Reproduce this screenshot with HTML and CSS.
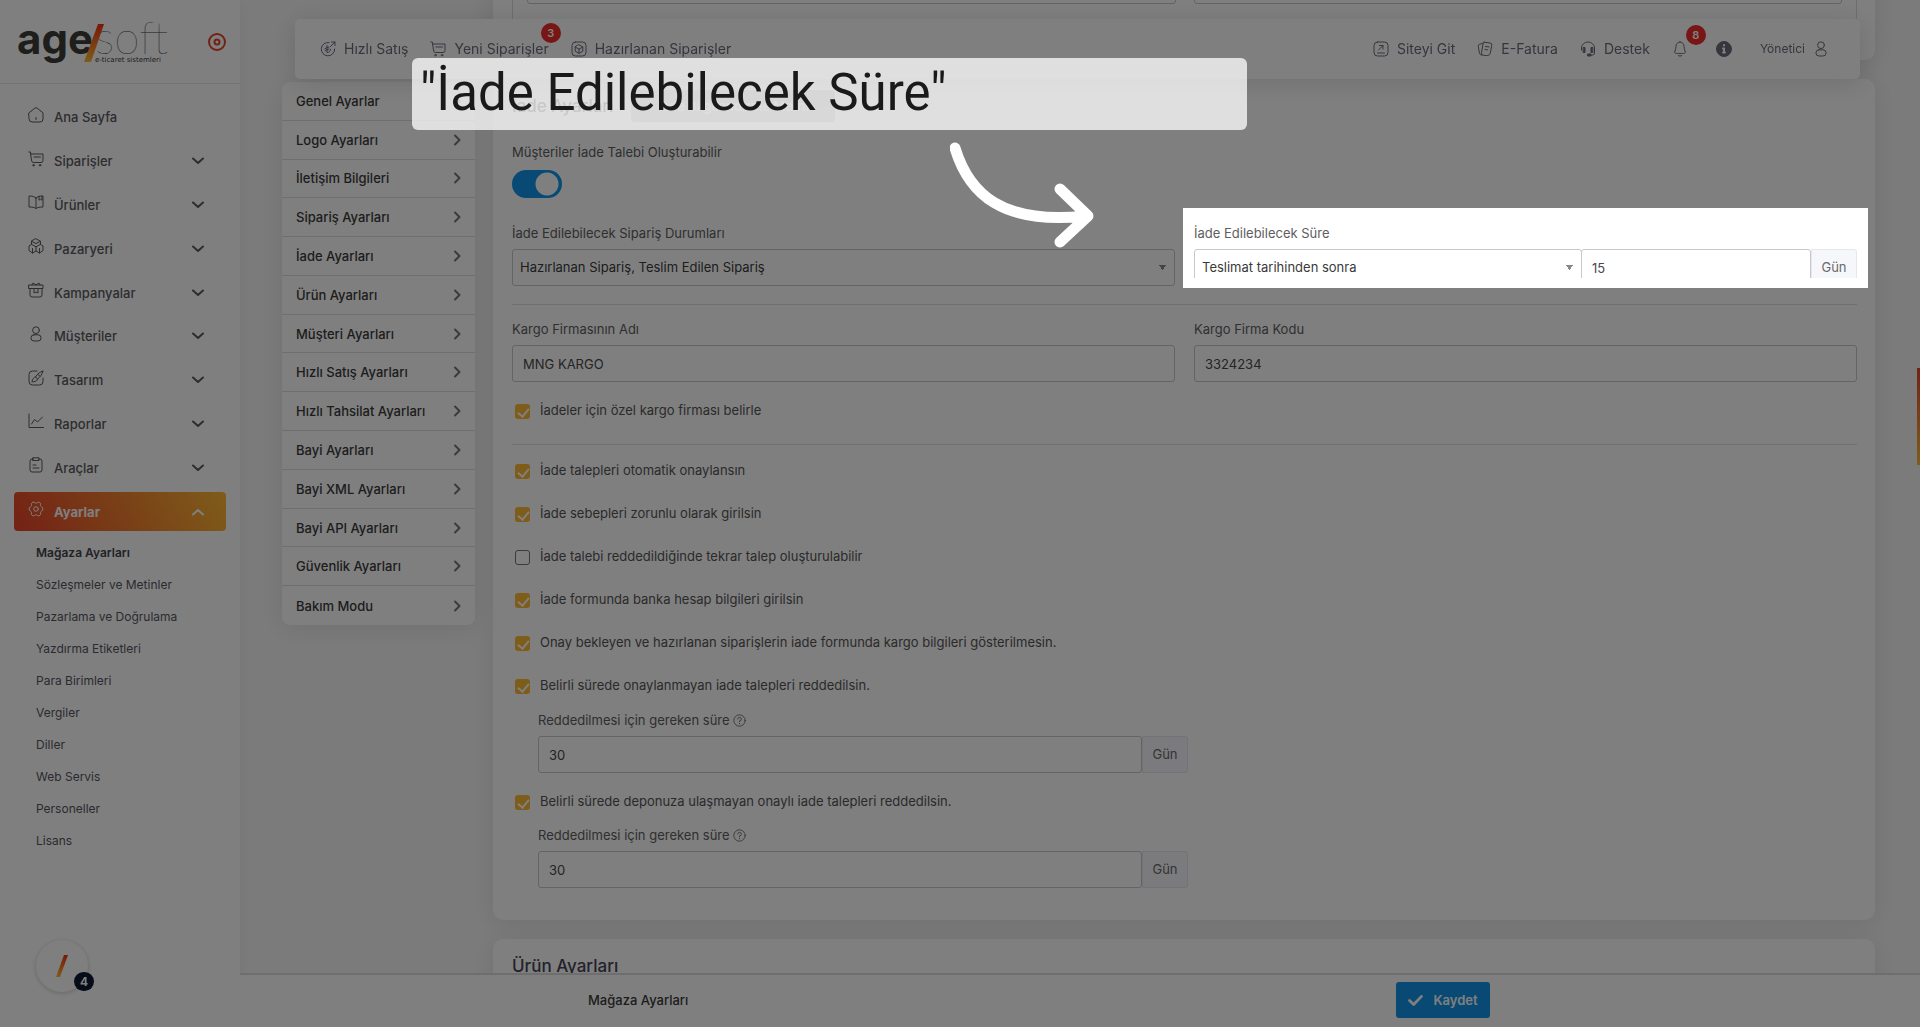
FILE: index.html
```html
<!DOCTYPE html>
<html lang="tr">
<head>
    <meta charset="UTF-8">
    <meta name="viewport" content="width=device-width, initial-scale=1.0">
    <title>Mağaza Ayarları</title>
    <link rel="stylesheet" href="styles.css">
</head>
<body>
    <!-- Icon set -->
    <svg class="sprite" aria-hidden="true">
        <symbol id="i-home" viewBox="0 0 16 16"><path d="M1 5.8 6.8 1.2a2 2 0 0 1 2.4 0L15 5.8V12a3 3 0 0 1-3 3H4a3 3 0 0 1-3-3zM8 10.5v2"/></symbol>
        <symbol id="i-cart" viewBox="0 0 16 16"><path d="M.8 1h1.6l.4 2M3 3h12v6.500a2 2 0 0 1-2 2H5.500a2 2 0 0 1-2-2zM6 6h6.500"/><circle cx="5.500" cy="14.200" r=".8"/><circle cx="12" cy="14.200" r=".8"/></symbol>
        <symbol id="i-book" viewBox="0 0 16 16"><path d="M8 4v10.500M8 4C6.500 2.500 4 2 1 2v11c3 0 5.500.3 7 1.500 1.500-1.200 4-1.500 7-1.500V2c-3 0-5.500.5-7 2zM11 2.200v4l1.500-1 1.500 1V2"/></symbol>
        <symbol id="i-box" viewBox="0 0 16 16"><path d="M8 .8 12.500 3.300v3L8 8.800 3.500 6.300v-3zM3.500 3.300 8 5.500l4.500-2.200M3.500 6.300 1 8v4.500L4.500 15 8 13V8.800M12.500 6.300 15 8v4.500L11.500 15 8 13M4.500 10.500V15M11.500 10.500V15"/></symbol>
        <symbol id="i-gift" viewBox="0 0 16 16"><path d="M1 3h14v3.500H1zM2 6.500V13a2 2 0 0 0 2 2h8a2 2 0 0 0 2-2V6.500M6 6.500v4.500l2-1 2 1V6.500M4 3l1-2 3 2 3-2 1 2"/></symbol>
        <symbol id="i-user" viewBox="0 0 16 16"><circle cx="8" cy="4.200" r="3.400"/><path d="M6 8.800h4a3.100 3.100 0 0 1 0 6.200H6a3.100 3.100 0 0 1 0-6.200z"/></symbol>
        <symbol id="i-brush" viewBox="0 0 16 16"><path d="M9 1H4.500A3.500 3.500 0 0 0 1 4.500v7A3.500 3.500 0 0 0 4.500 15h7a3.500 3.500 0 0 0 3.500-3.500V8M14.800 1.200C12 1.500 9.500 4 7.500 7l2.200 2c2.600-2.300 4.800-5 5.100-7.800zM7.500 7c-2.200.2-2.500 2-3.700 4.800 2.500.2 5-.3 5.900-2.800M10 4.500 12 6.200"/></symbol>
        <symbol id="i-chart" viewBox="0 0 16 16"><path d="M1 1v13.500h14.500M3.500 11 6.500 6.500 9.500 9 14.500 4"/></symbol>
        <symbol id="i-clip" viewBox="0 0 16 16"><path d="M5.500 2H4a2 2 0 0 0-2 2v9a2 2 0 0 0 2 2h8a2 2 0 0 0 2-2V4a2 2 0 0 0-2-2h-1.500M5 .8h6v2.700H5zM5 8h3M5 11h6"/></symbol>
        <symbol id="i-gear" viewBox="0 0 16 16"><path d="M5 1.200c1.200-.4 1.800 1 3 1s1.800-1.400 3-1 2 1.400 1.600 2.600c-.4 1.300.2 1.700 1.200 2.200 1.500.8 1.500 3.200 0 4-1 .5-1.600.9-1.200 2.200.4 1.200-.4 2.200-1.600 2.600s-1.800-1-3-1-1.800 1.400-3 1-2-1.400-1.600-2.600c.4-1.300-.2-1.700-1.200-2.200-1.500-.8-1.500-3.200 0-4 1-.5 1.600-.9 1.200-2.200C3 2.600 3.800 1.600 5 1.200z"/><circle cx="8" cy="8" r="2.300"/></symbol>
        <symbol id="i-down" viewBox="0 0 12 8"><path d="m1 1.500 5 4.500 5-4.500"/></symbol>
        <symbol id="i-up" viewBox="0 0 12 8"><path d="m1 6.500 5-4.500 5 4.500"/></symbol>
        <symbol id="i-right" viewBox="0 0 8 12"><path d="m2 1.500 4.500 4.500L2 10.500"/></symbol>
        <symbol id="i-sale" viewBox="0 0 16 16"><path d="M9 1.500A6.700 6.700 0 1 0 14.700 8M10.500 5.500 15 1M11.500 1H15v3.500M7 4.500v7c2 0 3.500-1 3.500-3M5 7.500l4-1.500M5 9.500 9 8"/></symbol>
        <symbol id="i-pack" viewBox="0 0 16 16"><rect x="1" y="1" width="14" height="14" rx="3.500"/><path d="M8 3.800 11.800 6v4.200L8 12.300l-3.800-2.100V6zM4.200 6 8 8.200 11.800 6M8 8.200v4"/></symbol>
        <symbol id="i-goto" viewBox="0 0 16 16"><rect x="1" y="1" width="14" height="14" rx="3.500"/><path d="M5.500 9 10 4.500M6.500 4.500H10V8M4.500 12h7"/></symbol>
        <symbol id="i-bill" viewBox="0 0 16 16"><path d="M7 1.200l6 .8a2 2 0 0 1 1.800 2.400L13.500 11a4 4 0 0 1-4.300 3.600l-3-.4a2 2 0 0 1-1.700-2.400L6 3A2 2 0 0 1 7 1.200zM5.300 2.500 2.800 3.200A2 2 0 0 0 1.300 5.500L2.400 12a3 3 0 0 0 2.500 2.300M8.500 5.500l3.500.4M8 8.500l2.500.3"/></symbol>
        <symbol id="i-head" viewBox="0 0 16 16"><path d="M1.500 9V7a6.500 6 0 0 1 13 0v5a2 2 0 0 1-2 2H9"/><path class="solid" d="M3.500 6.500h1.500v5H3.500zM12.500 6.500H11v5h1.500zM8 13h3v2H8z"/></symbol>
        <symbol id="i-bell" viewBox="0 0 16 16"><path d="M8 1a4 4 0 0 0-4 4.200C4 8.800 2.700 9.500 2.700 11S4 12.500 8 12.500s5.300 0 5.300-1.500S12 8.800 12 5.200A4 4 0 0 0 8 1zM6.300 14.600c1 .7 2.400.7 3.400 0"/></symbol>
        <symbol id="i-info" viewBox="0 0 16 16"><circle class="solid" cx="8" cy="8" r="7.500"/><path class="cut" d="M8 4v.5M7 7.500h1v4M7 11.500h2"/></symbol>
        <symbol id="i-help" viewBox="0 0 16 16"><circle cx="8" cy="8" r="7"/><path d="M5.800 6.300A2.200 2.200 0 1 1 8 8.500v1M8 11.500v.5"/></symbol>
        <symbol id="i-check" viewBox="0 0 16 12"><path d="m1.500 6 4.500 4.300L14.500 1.500"/></symbol>
    </svg>

    <div class="layout">
        <aside class="sidebar">
            <div class="brand">
                <svg class="logo" viewBox="0 0 150 46" role="img" aria-label="agesoft e-ticaret sistemleri">
                    <defs>
                        <linearGradient id="slash" x1="0" y1="0" x2="0" y2="1">
                            <stop offset="0" stop-color="#f0300f"/>
                            <stop offset="1" stop-color="#fdb933"/>
                        </linearGradient>
                    </defs>
                    <text class="logo-bold" x="-1" y="35">age</text>
                    <text class="logo-thin" x="77" y="35">soft</text>
                    <path d="M80 5h6L73 43h-7z" fill="url(#slash)"/>
                    <text class="logo-tag" x="77" y="43">e-ticaret sistemleri</text>
                </svg>
                <svg class="pin" viewBox="0 0 18 18"><circle cx="9" cy="9" r="8"/><circle cx="9" cy="9" r="2.500"/></svg>
            </div>
            <nav class="menu">
                <a href="#"><svg class="icon"><use href="#i-home"/></svg><span>Ana Sayfa</span></a>
                <a href="#"><svg class="icon"><use href="#i-cart"/></svg><span>Siparişler</span><svg class="arrow"><use href="#i-down"/></svg></a>
                <a href="#"><svg class="icon"><use href="#i-book"/></svg><span>Ürünler</span><svg class="arrow"><use href="#i-down"/></svg></a>
                <a href="#"><svg class="icon"><use href="#i-box"/></svg><span>Pazaryeri</span><svg class="arrow"><use href="#i-down"/></svg></a>
                <a href="#"><svg class="icon"><use href="#i-gift"/></svg><span>Kampanyalar</span><svg class="arrow"><use href="#i-down"/></svg></a>
                <a href="#"><svg class="icon"><use href="#i-user"/></svg><span>Müşteriler</span><svg class="arrow"><use href="#i-down"/></svg></a>
                <a href="#"><svg class="icon"><use href="#i-brush"/></svg><span>Tasarım</span><svg class="arrow"><use href="#i-down"/></svg></a>
                <a href="#"><svg class="icon"><use href="#i-chart"/></svg><span>Raporlar</span><svg class="arrow"><use href="#i-down"/></svg></a>
                <a href="#"><svg class="icon"><use href="#i-clip"/></svg><span>Araçlar</span><svg class="arrow"><use href="#i-down"/></svg></a>
                <a href="#" class="active"><svg class="icon"><use href="#i-gear"/></svg><span>Ayarlar</span><svg class="arrow"><use href="#i-up"/></svg></a>
            </nav>
            <nav class="submenu">
                <a href="#" class="current">Mağaza Ayarları</a>
                <a href="#">Sözleşmeler ve Metinler</a>
                <a href="#">Pazarlama ve Doğrulama</a>
                <a href="#">Yazdırma Etiketleri</a>
                <a href="#">Para Birimleri</a>
                <a href="#">Vergiler</a>
                <a href="#">Diller</a>
                <a href="#">Web Servis</a>
                <a href="#">Personeller</a>
                <a href="#">Lisans</a>
            </nav>
            <button class="chat" type="button" aria-label="Canlı destek">
                <svg viewBox="0 0 14 24"><path d="M9 1h4L5 23H1z" fill="url(#slash)"/></svg>
                <span class="chat-count">4</span>
            </button>
        </aside>

        <main class="content">
            <nav class="settings-nav">
                <a href="#">Genel Ayarlar<svg><use href="#i-right"/></svg></a>
                <a href="#">Logo Ayarları<svg><use href="#i-right"/></svg></a>
                <a href="#">İletişim Bilgileri<svg><use href="#i-right"/></svg></a>
                <a href="#">Sipariş Ayarları<svg><use href="#i-right"/></svg></a>
                <a href="#">İade Ayarları<svg><use href="#i-right"/></svg></a>
                <a href="#">Ürün Ayarları<svg><use href="#i-right"/></svg></a>
                <a href="#">Müşteri Ayarları<svg><use href="#i-right"/></svg></a>
                <a href="#">Hızlı Satış Ayarları<svg><use href="#i-right"/></svg></a>
                <a href="#">Hızlı Tahsilat Ayarları<svg><use href="#i-right"/></svg></a>
                <a href="#">Bayi Ayarları<svg><use href="#i-right"/></svg></a>
                <a href="#">Bayi XML Ayarları<svg><use href="#i-right"/></svg></a>
                <a href="#">Bayi API Ayarları<svg><use href="#i-right"/></svg></a>
                <a href="#">Güvenlik Ayarları<svg><use href="#i-right"/></svg></a>
                <a href="#">Bakım Modu<svg><use href="#i-right"/></svg></a>
            </nav>

            <div class="cards">
                <section class="card card-prev">
                    <div class="inset">
                        <input class="control" type="text" aria-label="Ayar 1">
                        <input class="control" type="text" aria-label="Ayar 2">
                    </div>
                </section>

                <section class="card">
                    <div class="card-head">
                        <h2>İade Ayarları</h2>
                        <button class="btn-light" type="button">İade Bilgilendirme Metni</button>
                    </div>

                    <label class="label" for="talep">Müşteriler İade Talebi Oluşturabilir</label>
                    <input class="switch" type="checkbox" id="talep" checked>

                    <div class="row">
                        <div>
                            <label class="label" for="durum">İade Edilebilecek Sipariş Durumları</label>
                            <select class="control" id="durum"><option>Hazırlanan Sipariş, Teslim Edilen Sipariş</option></select>
                        </div>
                        <div class="spotlight">
                            <label class="label" for="sure">İade Edilebilecek Süre</label>
                            <div class="group">
                                <select class="control" id="sure"><option>Teslimat tarihinden sonra</option></select>
                                <input class="control days" type="text" value="15" aria-label="Gün sayısı">
                                <span class="addon">Gün</span>
                            </div>
                        </div>
                    </div>
                    <hr>
                    <div class="row">
                        <div>
                            <label class="label" for="firma">Kargo Firmasının Adı</label>
                            <input class="control" type="text" id="firma" value="MNG KARGO">
                        </div>
                        <div>
                            <label class="label" for="kod">Kargo Firma Kodu</label>
                            <input class="control" type="text" id="kod" value="3324234">
                        </div>
                    </div>
                    <label class="check"><input type="checkbox" checked>İadeler için özel kargo firması belirle</label>
                    <hr>
                    <div class="checks">
                        <label class="check"><input type="checkbox" checked>İade talepleri otomatik onaylansın</label>
                        <label class="check"><input type="checkbox" checked>İade sebepleri zorunlu olarak girilsin</label>
                        <label class="check"><input type="checkbox">İade talebi reddedildiğinde tekrar talep oluşturulabilir</label>
                        <label class="check"><input type="checkbox" checked>İade formunda banka hesap bilgileri girilsin</label>
                        <label class="check"><input type="checkbox" checked>Onay bekleyen ve hazırlanan siparişlerin iade formunda kargo bilgileri gösterilmesin.</label>
                        <label class="check"><input type="checkbox" checked>Belirli sürede onaylanmayan iade talepleri reddedilsin.</label>
                    </div>
                    <div class="nested">
                        <label class="label" for="red1">Reddedilmesi için gereken süre <svg class="help"><use href="#i-help"/></svg></label>
                        <div class="group">
                            <input class="control" type="text" id="red1" value="30">
                            <span class="addon">Gün</span>
                        </div>
                    </div>
                    <label class="check"><input type="checkbox" checked>Belirli sürede deponuza ulaşmayan onaylı iade talepleri reddedilsin.</label>
                    <div class="nested">
                        <label class="label" for="red2">Reddedilmesi için gereken süre <svg class="help"><use href="#i-help"/></svg></label>
                        <div class="group">
                            <input class="control" type="text" id="red2" value="30">
                            <span class="addon">Gün</span>
                        </div>
                    </div>
                </section>

                <section class="card">
                    <div class="card-head"><h2>Ürün Ayarları</h2></div>
                </section>
            </div>
        </main>
    </div>

    <header class="topbar">
        <a href="#"><svg class="icon"><use href="#i-sale"/></svg>Hızlı Satış</a>
        <a href="#"><svg class="icon"><use href="#i-cart"/></svg>Yeni Siparişler<span class="badge">3</span></a>
        <a href="#"><svg class="icon"><use href="#i-pack"/></svg>Hazırlanan Siparişler</a>
        <div class="topbar-right">
            <a href="#"><svg class="icon"><use href="#i-goto"/></svg>Siteyi Git</a>
            <a href="#"><svg class="icon"><use href="#i-bill"/></svg>E-Fatura</a>
            <a href="#"><svg class="icon"><use href="#i-head"/></svg>Destek</a>
            <a href="#" class="bell" aria-label="Bildirimler"><svg class="icon"><use href="#i-bell"/></svg><span class="badge">8</span></a>
            <a href="#" class="info" aria-label="Bilgi"><svg class="icon"><use href="#i-info"/></svg></a>
            <a href="#" class="account">Yönetici<svg class="icon"><use href="#i-user"/></svg></a>
        </div>
    </header>

    <footer class="savebar">
        <span>Mağaza Ayarları</span>
        <button type="button"><svg><use href="#i-check"/></svg>Kaydet</button>
    </footer>
    <div class="side-tab"></div>

    <!-- Guided tour -->
    <div class="backdrop"></div>
    <div class="callout">"İade Edilebilecek Süre"</div>
    <svg class="pointer" viewBox="0 0 144 106"><path d="M5 6C19 52 52 83 136 74M110 47l28 27-28 26"/></svg>
</body>
</html>
```

FILE: styles.css
```css
* {
    box-sizing: border-box;
}
body {
    margin: 0;
    height: 100vh;
    overflow: hidden;
    background: #f7f7f7;
    color: #4a4a4a;
    font-family: Inter, "Open Sans", sans-serif;
    font-size: 13px;
    line-height: 20px;
}
a {
    color: inherit;
    text-decoration: none;
}
button, input, select {
    font: inherit;
    color: inherit;
}
svg {
    fill: none;
    stroke: currentColor;
    stroke-linecap: round;
    stroke-linejoin: round;
}
.sprite {
    position: absolute;
    width: 0;
    height: 0;
}
.solid {
    fill: currentColor;
}
.cut {
    stroke: #fff;
    stroke-width: 2;
}
.icon {
    width: 16px;
    height: 16px;
    flex: none;
}
.layout {
    display: flex;
    height: 100vh;
    overflow: hidden;
}

/* Sidebar */
.sidebar {
    width: 240px;
    flex: none;
    background: #fff;
    box-shadow: 0 0 15px rgba(34, 41, 47, 0.05);
}
.brand {
    display: flex;
    align-items: center;
    justify-content: space-between;
    height: 84px;
    padding: 0 14px 0 18px;
    border-bottom: 1px solid #e4e4e4;
}
.logo {
    width: 150px;
    height: 46px;
    overflow: visible;
    stroke: none;
    fill: #3c3c3b;
}
.logo-bold {
    font: 700 42px Inter, sans-serif;
}
.logo-thin {
    font: 100 46px Lato, sans-serif;
}
.logo-tag {
    font: 7px "DejaVu Sans", sans-serif;
}
.pin {
    width: 18px;
    height: 18px;
    color: #e8432a;
    stroke-width: 2;
}
.menu {
    display: grid;
    grid-auto-rows: 1fr;
    gap: 5px;
    height: 447px;
    padding: 14px 14px 0;
}
.menu a {
    display: flex;
    align-items: center;
    padding: 0 22px 0 14px;
    border-radius: 4px;
    font-weight: 500;
    color: #5a5a5e;
}
.menu .icon {
    margin: 0 10px 5px 0;
}
.arrow {
    width: 12px;
    height: 8px;
    margin-left: auto;
    stroke-width: 2;
}
.menu .active {
    background: linear-gradient(60deg, #e8432a, #fdb933);
    color: #fff;
    font-weight: 700;
}
.submenu {
    padding: 6px 0 0 36px;
    font-size: 12px;
    color: #56565e;
}
.submenu a {
    display: block;
    line-height: 32px;
}
.submenu .current {
    font-weight: 600;
    color: #44444c;
}
.chat {
    position: fixed;
    left: 36px;
    bottom: 35px;
    width: 52px;
    height: 52px;
    padding: 0;
    border: 0;
    border-radius: 50%;
    background: #fff;
    box-shadow: 0 1px 5px rgba(0, 0, 0, 0.2);
}
.chat svg {
    width: 14px;
    height: 24px;
    stroke: none;
    vertical-align: middle;
}
.chat-count {
    position: absolute;
    right: -6px;
    bottom: 1px;
    width: 20px;
    height: 19px;
    border-radius: 10px;
    background: #0d1a33;
    color: #fff;
    font-size: 12px;
    font-weight: 700;
    line-height: 19px;
}

/* Top bar */
.topbar {
    position: fixed;
    z-index: 10;
    top: 19px;
    left: 295px;
    right: 60px;
    display: flex;
    gap: 22px;
    height: 60px;
    padding: 0 31px 0 25px;
    border-radius: 5px;
    background: #fff;
    box-shadow: 0 4px 24px rgba(34, 41, 47, 0.15);
    color: #6e6b7b;
    font-size: 14px;
}
.topbar a {
    position: relative;
    display: flex;
    align-items: center;
    gap: 8px;
    height: 59px;
}
.topbar-right {
    display: flex;
    gap: 22px;
    margin-left: auto;
}
.badge {
    position: absolute;
    top: 4px;
    right: -12px;
    width: 20px;
    height: 20px;
    border-radius: 50%;
    background: #f02a2a;
    color: #fff;
    font-size: 11px;
    font-weight: 600;
    text-align: center;
}
.bell .badge {
    top: 6px;
    right: -18px;
}
.info {
    margin-left: 6px;
}
.topbar .account {
    margin-left: 6px;
    font-size: 12px;
}

/* Settings */
.content {
    flex: 1;
    display: flex;
    gap: 18px;
    align-items: flex-start;
    padding: 0 45px 0 42px;
}
.settings-nav {
    display: grid;
    grid-auto-rows: 1fr;
    width: 193px;
    height: 543px;
    flex: none;
    margin-top: 82px;
    border-radius: 8px;
    background: #fff;
    box-shadow: 0 4px 24px rgba(34, 41, 47, 0.1);
    color: #3a3a3a;
    font-weight: 500;
}
.settings-nav a {
    display: flex;
    align-items: center;
    justify-content: space-between;
    padding: 0 14px;
    border-bottom: 1px solid #dedede;
}
.settings-nav a:last-child {
    border-bottom: 0;
}
.settings-nav svg {
    width: 8px;
    height: 12px;
    color: #777;
    stroke-width: 2;
}
.cards {
    flex: 1;
    display: grid;
    gap: 19px;
    margin-top: -60px;
}
.card {
    padding: 11px 18px 32px 19px;
    border-radius: 10px;
    background: #fff;
    box-shadow: 0 4px 24px rgba(34, 41, 47, 0.1);
}
.card-prev {
    padding-bottom: 21px;
}
.inset {
    display: grid;
    grid-template-columns: 1fr 1fr;
    gap: 18px;
    height: 88px;
    padding: 15px 14px 12px;
    border: 1px solid #dcdcdc;
    border-radius: 4px;
}
.card-head {
    display: flex;
    align-items: center;
    gap: 18px;
    height: 32px;
    margin-bottom: 20px;
}
.card h2 {
    margin: 0;
    color: #464457;
    font-size: 17px;
    font-weight: 500;
}
.btn-light {
    width: 204px;
    height: 32px;
    border: 0;
    border-radius: 3px;
    background: #c2c2c6;
    color: #fff;
    font-weight: 600;
}
.label {
    display: block;
    margin-bottom: 6px;
    color: #5e5e5e;
}
.control {
    display: block;
    width: 100%;
    height: 37px;
    padding: 0 10px;
    border: 1px solid #c8c8c8;
    border-radius: 3px;
    background: #fff;
}
select.control {
    appearance: none;
    padding: 0 8px 2px 7px;
    background: conic-gradient(from -35deg at 50% 100%, #888 70deg, transparent 0) right 8px center / 7px 5px no-repeat #fff;
    color: #3a3a3a;
}
.switch {
    appearance: none;
    display: block;
    width: 50px;
    height: 28px;
    margin: 8px 0 25px;
    border-radius: 14px;
    background: radial-gradient(circle at 35px 14px, #fff 11px, #1195e9 12px);
}
.row {
    display: grid;
    grid-template-columns: 1fr 1fr;
    align-items: start;
    gap: 19px;
}
.group {
    display: flex;
}
.group .days {
    width: 230px;
    flex: none;
    margin-left: -1px;
}
.addon {
    width: 46px;
    height: 37px;
    flex: none;
    border: 1px solid #e6e6ee;
    border-radius: 0 3px 3px 0;
    background: #f6f7fb;
    color: #6a6a6a;
    line-height: 34px;
    text-align: center;
}
hr {
    height: 1px;
    margin: 18px 0 14px;
    border: 0;
    background: #e0e0e0;
}
.check {
    display: flex;
    align-items: center;
    gap: 10px;
    padding-left: 3px;
    color: #555;
}
.check input {
    appearance: none;
    width: 15px;
    height: 15px;
    margin: 2px 0 0;
    border: 1px solid #777;
    border-radius: 3px;
}
.check input:checked {
    border: 0;
    background: #fdb933;
}
.check input:checked::after {
    content: "";
    display: block;
    width: 5px;
    height: 9px;
    margin: 2px 5px;
    border: solid #fff;
    border-width: 0 2px 2px 0;
    transform: rotate(40deg);
}
.row + .check {
    margin: 18px 0 24px;
}
.checks {
    display: grid;
    gap: 23px;
    margin: 15px 0;
}
.nested {
    width: 50%;
    margin: 0 0 18px 26px;
}
.check + .nested {
    margin: 14px 0 0 26px;
}
.nested .group {
    width: 650px;
    max-width: 100%;
}
.help {
    width: 13px;
    height: 13px;
    vertical-align: -2px;
}

/* Save bar */
.savebar {
    position: fixed;
    z-index: 10;
    left: 240px;
    right: 0;
    bottom: 0;
    display: flex;
    align-items: center;
    justify-content: space-between;
    height: 54px;
    padding: 0 430px 2px 348px;
    border-top: 2px solid #dcdcdc;
    background: #fff;
    color: #3a3a3a;
    font-weight: 500;
}
.savebar button {
    display: flex;
    align-items: center;
    justify-content: center;
    gap: 10px;
    width: 94px;
    height: 36px;
    padding: 0;
    border: 0;
    border-radius: 3px;
    background: #1195e9;
    color: #fff;
    font-weight: 600;
}
.savebar svg {
    width: 15px;
    height: 11px;
    stroke-width: 3;
}
.side-tab {
    position: fixed;
    z-index: 10;
    top: 368px;
    right: 0;
    width: 3px;
    height: 97px;
    background: linear-gradient(#e8432a, #fdb933);
}

/* Tour overlay */
.backdrop {
    position: fixed;
    z-index: 50;
    inset: 0;
    background: rgba(0, 0, 0, 0.5);
}
.spotlight {
    position: relative;
    z-index: 60;
    margin: -15px -11px -4px;
    padding: 15px 11px 10px;
    background: #fff;
}
.spotlight .group {
    height: 29px;
    overflow: hidden;
}
.callout {
    position: fixed;
    z-index: 60;
    top: 58px;
    left: 412px;
    width: 835px;
    height: 72px;
    padding-left: 8px;
    border-radius: 6px;
    background: rgba(255, 255, 255, 0.75);
    color: #1a1a1a;
    font-family: Roboto, sans-serif;
    font-size: 51px;
    line-height: 70px;
}
.pointer {
    position: fixed;
    z-index: 60;
    top: 142px;
    left: 950px;
    width: 144px;
    height: 106px;
    color: #fff;
    stroke-width: 11;
}
```
